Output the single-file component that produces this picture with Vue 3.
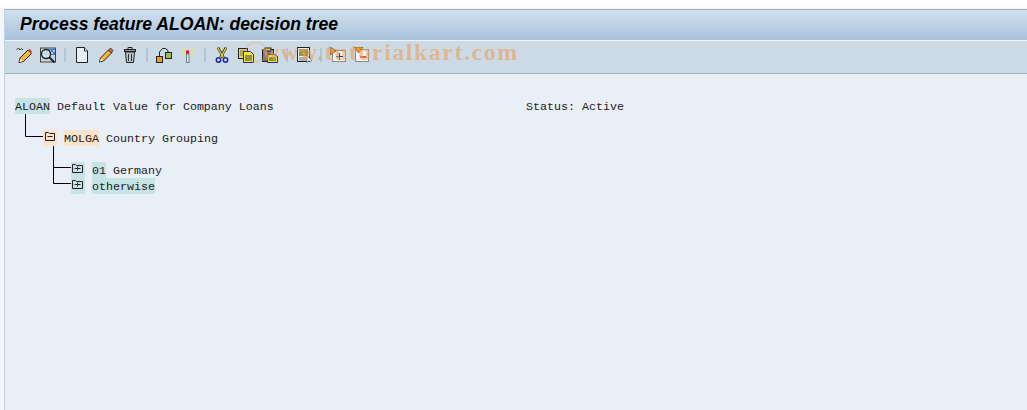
<template>
  <div class="page">
    <div class="window">
      <div class="title-bar">
        <h1>Process feature ALOAN: decision tree</h1>
      </div>
      <div class="toolbar">
        <button class="tool">
          <svg viewBox="0 0 16 16"><path d="M0.500 3l2-2 1.500 2 1.500-1.500L7 3" fill="none" stroke="#333" /><path d="M3 15.500l1-4.500 8-8 3.500 3.500-8 8z" fill="#f7b733" stroke="#222" /><path d="M12 3l1.500-1.500 2.500 2.500-0.500 2z" fill="#e85a4a" /><path d="M3.500 15l0.800-3 2.200 2.200z" fill="#fff" /></svg>
        </button>
        <button class="tool">
          <svg viewBox="0 0 16 16"><rect x="0.500" y="1" width="15" height="14" fill="#c9d3dc" stroke="#444" /><rect x="4" y="2" width="11" height="6" fill="#3f7fd0" /><path d="M5 3h2v2H5zM9 3h2v2H9zM13 3h2v2h-2zM7 5h2v2H7zM11 5h2v2h-2z" fill="#a9c9ee" /><circle cx="6" cy="7" r="4.500" fill="#d5e6f5" fill-opacity="0.85" stroke="#222" stroke-width="1.300" /><path d="M9 10l5.500 5.500" stroke="#222" stroke-width="2" /></svg>
        </button>
        <span class="sep"></span>
        <button class="tool">
          <svg viewBox="0 0 16 16"><path d="M2.500 0.500h8l3 3.500v11.500h-11z" fill="#e8f1fa" stroke="#222" /><path d="M10.500 0.500v3.500h3" fill="#fff" stroke="#222" /></svg>
        </button>
        <button class="tool">
          <svg viewBox="0 0 16 16"><path d="M1.500 15l1-4 8-8 3 3-8 8z" fill="#f7b733" stroke="#222" /><path d="M10.500 3l2-2 2.500 2.500-1.500 2.500z" fill="#e85a4a" stroke="#222" stroke-width="0.700" /><path d="M2 14.500l0.800-3 2.200 2.200z" fill="#fff" /></svg>
        </button>
        <button class="tool">
          <svg viewBox="0 0 16 16"><rect x="2.500" y="2.500" width="11" height="2" fill="#8c959e" stroke="#222" /><path d="M6 2.500v-2h4v2" fill="none" stroke="#222" /><path d="M3.500 5h9l-1 10.500h-7z" fill="#bcc4cc" stroke="#222" /><path d="M6.500 7v7M9.500 7v7" stroke="#333" /></svg>
        </button>
        <span class="sep"></span>
        <button class="tool">
          <svg viewBox="0 0 16 16"><rect x="0.500" y="9.500" width="6" height="6" fill="#f29a1f" stroke="#222" /><rect x="9.500" y="5.500" width="6" height="6" fill="#9dbb55" stroke="#222" /><path d="M3.500 9V5l3-3.500h3l2.500 2v2" fill="none" stroke="#222" /></svg>
        </button>
        <button class="tool">
          <svg viewBox="0 0 16 16"><path d="M7.500 0v3M2 1l3 3M13 1l-3 3M1 6h3M11 6h4M3 10l2-2M12 10l-2-2" stroke="#f2ee30" /><rect x="6" y="3.500" width="3" height="3.500" fill="#e01030" /><rect x="6.500" y="7" width="2.500" height="8.500" fill="#e5ebf1" stroke="#6c7c8c" /></svg>
        </button>
        <span class="sep"></span>
        <button class="tool">
          <svg viewBox="0 0 16 16"><path d="M4 0.500l5.500 10M12 0.500L6.500 10.500" stroke="#333" stroke-width="2.600" /><path d="M4 1l5.500 9.500M12 1L6.500 10.500" stroke="#f2d820" stroke-width="1.200" /><circle cx="4.500" cy="13" r="2.200" fill="none" stroke="#1a2a9a" stroke-width="1.500" /><circle cx="11.500" cy="13" r="2.200" fill="none" stroke="#1a2a9a" stroke-width="1.500" /></svg>
        </button>
        <button class="tool">
          <svg viewBox="0 0 16 16"><rect x="0.500" y="1.500" width="9" height="10" fill="#e8d27a" stroke="#222" /><path d="M2 4h6M2 6h6M2 8h6" stroke="#8a7a30" /><path d="M5.500 4.500h7l3 3v8h-10z" fill="#f8ea20" stroke="#1a2a9a" /><path d="M7 9h7M7 11h7M7 13h7" stroke="#1a2a9a" /></svg>
        </button>
        <button class="tool">
          <svg viewBox="0 0 16 16"><rect x="0.500" y="2.500" width="11" height="12" fill="#70768a" stroke="#222" /><rect x="3" y="1" width="6" height="3" fill="#d8c878" stroke="#222" /><path d="M5.500 7.500h7l3 2v6h-10z" fill="#f8ea20" stroke="#1a2a9a" /><path d="M7 11h7M7 13h7" stroke="#1a2a9a" /></svg>
        </button>
        <span class="sep"></span>
        <button class="tool">
          <svg viewBox="0 0 16 16"><rect x="1.500" y="0.500" width="12" height="14" fill="#e8edf2" stroke="#222" /><rect x="3" y="2" width="9" height="7" fill="#8d9a3a" /><path d="M3 3h2v2H3zM7 5h2v2H7zM9 2h2v2H9z" fill="#c89a3a" /><path d="M3 11h9M3 13h8" stroke="#777" /><path d="M11 8.500v7l2-1.500 3 0z" fill="#fff" stroke="#555" stroke-width="0.600" /></svg>
        </button>
        <span class="sep"></span>
        <button class="tool">
          <svg viewBox="0 0 16 16"><rect x="2.500" y="3.500" width="13" height="11" fill="#f2f4f6" stroke="#8a8a8a" /><path d="M6 9.500h7M9.500 6v7" stroke="#1a2a9a" stroke-width="1.200" /><path d="M0.500 0l5.500 4-5.500 4z" fill="#f29a1f" stroke="#333" stroke-width="0.500" /></svg>
        </button>
        <button class="tool">
          <svg viewBox="0 0 16 16"><rect x="1.500" y="2.500" width="13" height="12" fill="#f2f4f6" stroke="#8a8a8a" /><path d="M6 10h6" stroke="#c01030" stroke-width="1.400" /><path d="M0 0h9l-4.500 6z" fill="#f29a1f" stroke="#333" stroke-width="0.500" /></svg>
        </button>
      </div>

      <div class="tree">
        <svg class="lines" width="80" height="120" viewBox="0 0 80 120">
          <path d="M25.500 40v22.500h18M53.500 72v37.500h18M53.500 93.500h18" fill="none" stroke="#000" />
        </svg>
        <div class="row">
          <span class="hl-teal">ALOAN</span><span> Default Value for Company Loans</span>
          <span class="status">Status: Active</span>
        </div>
        <div class="row"></div>
        <div class="row lvl1">
          <span class="node orange"><svg viewBox="0 0 14 16"><path d="M2.500 10.500v-8h3l1 1h5v7zM4.500 6.500h5" fill="none" stroke="#222" /></svg></span>
          <span class="hl-orange name">MOLGA</span><span> Country Grouping</span>
        </div>
        <div class="row"></div>
        <div class="row lvl2">
          <span class="node teal"><svg viewBox="0 0 14 16"><path d="M1.500 10.500v-8h3l1 1h6v7zM3.500 6.500h6M6.500 4.500v4" fill="none" stroke="#222" /></svg></span>
          <span class="hl-teal name">01</span><span> Germany</span>
        </div>
        <div class="row lvl2">
          <span class="node teal"><svg viewBox="0 0 14 16"><path d="M1.500 10.500v-8h3l1 1h6v7zM3.500 6.500h6M6.500 4.500v4" fill="none" stroke="#222" /></svg></span>
          <span class="hl-teal name">otherwise</span>
        </div>
      </div>

      <div class="watermark"><span class="ring"></span>www.tutorialkart.com</div>
    </div>
  </div>
</template>

<script setup>
</script>

<style>
html, body {
  background: #fff;
  overflow: hidden;
}
</style>

<style scoped>
.page {
  width: 1027px;
  height: 410px;
  padding: 9px 0 0 4px;
  box-sizing: border-box;
  background: linear-gradient(#ffffff 0, #ffffff 7px, #eef0f3 9px, #f3f6fa 12px);
}

.window {
  position: relative;
  height: 401px;
  background: #e8eff7;
  border-left: 1px solid #c3d2df;
}

.title-bar {
  height: 32px;
  box-sizing: border-box;
  border-top: 1px solid #9fb2c2;
  border-bottom: 1px solid #eef3f8;
  background: linear-gradient(#d0e0ee, #a9c2da);
  padding: 0 0 2px 15px;
  display: flex;
  align-items: center;
}

h1 {
  margin: 0;
  font-family: "Liberation Sans", Arial, sans-serif;
  font-size: 17.6px;
  font-weight: bold;
  font-style: italic;
  color: #000;
}

.toolbar {
  height: 33px;
  box-sizing: border-box;
  background: #ccdae6;
  border-bottom: 1px solid #a0b4c0;
  padding: 0 0 4px 7px;
  display: flex;
  align-items: center;
}

.tool {
  width: 24px;
  height: 18px;
  padding: 0;
  border: none;
  background: none;
  display: flex;
  justify-content: center;
  align-items: center;
}

.tool svg {
  width: 16px;
  height: 16px;
}

.sep {
  width: 2px;
  height: 14px;
  margin: 0 4px;
  background: #b4c6d6;
}

.tree {
  position: relative;
  padding: 24px 0 0 10px;
  font-family: "Liberation Mono", "Courier New", monospace;
  font-size: 11.67px;
  color: #1c1c1c;
}

.lines {
  position: absolute;
  left: -5px;
  top: 0;
}

.row {
  display: flex;
  height: 16px;
  line-height: 18px;
  white-space: pre;
}

.lvl1 {
  padding-left: 28px;
}

.lvl2 {
  padding-left: 56px;
}

.status {
  position: absolute;
  left: 521px;
}

.hl-teal {
  background: #c8e3e6;
}

.hl-orange {
  background: #fbe2c8;
}

.name {
  margin-left: 7px;
}

.node {
  width: 14px;
  height: 16px;
  position: relative;
  z-index: 1;
}

.node svg {
  display: block;
  width: 14px;
  height: 16px;
}

.orange {
  background: #fbe2c8;
}

.teal {
  background: #c8e3e6;
}

.watermark {
  position: absolute;
  left: 257px;
  top: 30px;
  font-family: "Liberation Serif", serif;
  font-size: 24px;
  font-weight: bold;
  letter-spacing: 1.5px;
  color: rgba(235, 160, 90, 0.6);
  pointer-events: none;
}

.ring {
  position: absolute;
  left: -17px;
  top: 2px;
  width: 18px;
  height: 18px;
  border: 2px solid rgba(235, 160, 90, 0.25);
  border-radius: 50%;
}
</style>
